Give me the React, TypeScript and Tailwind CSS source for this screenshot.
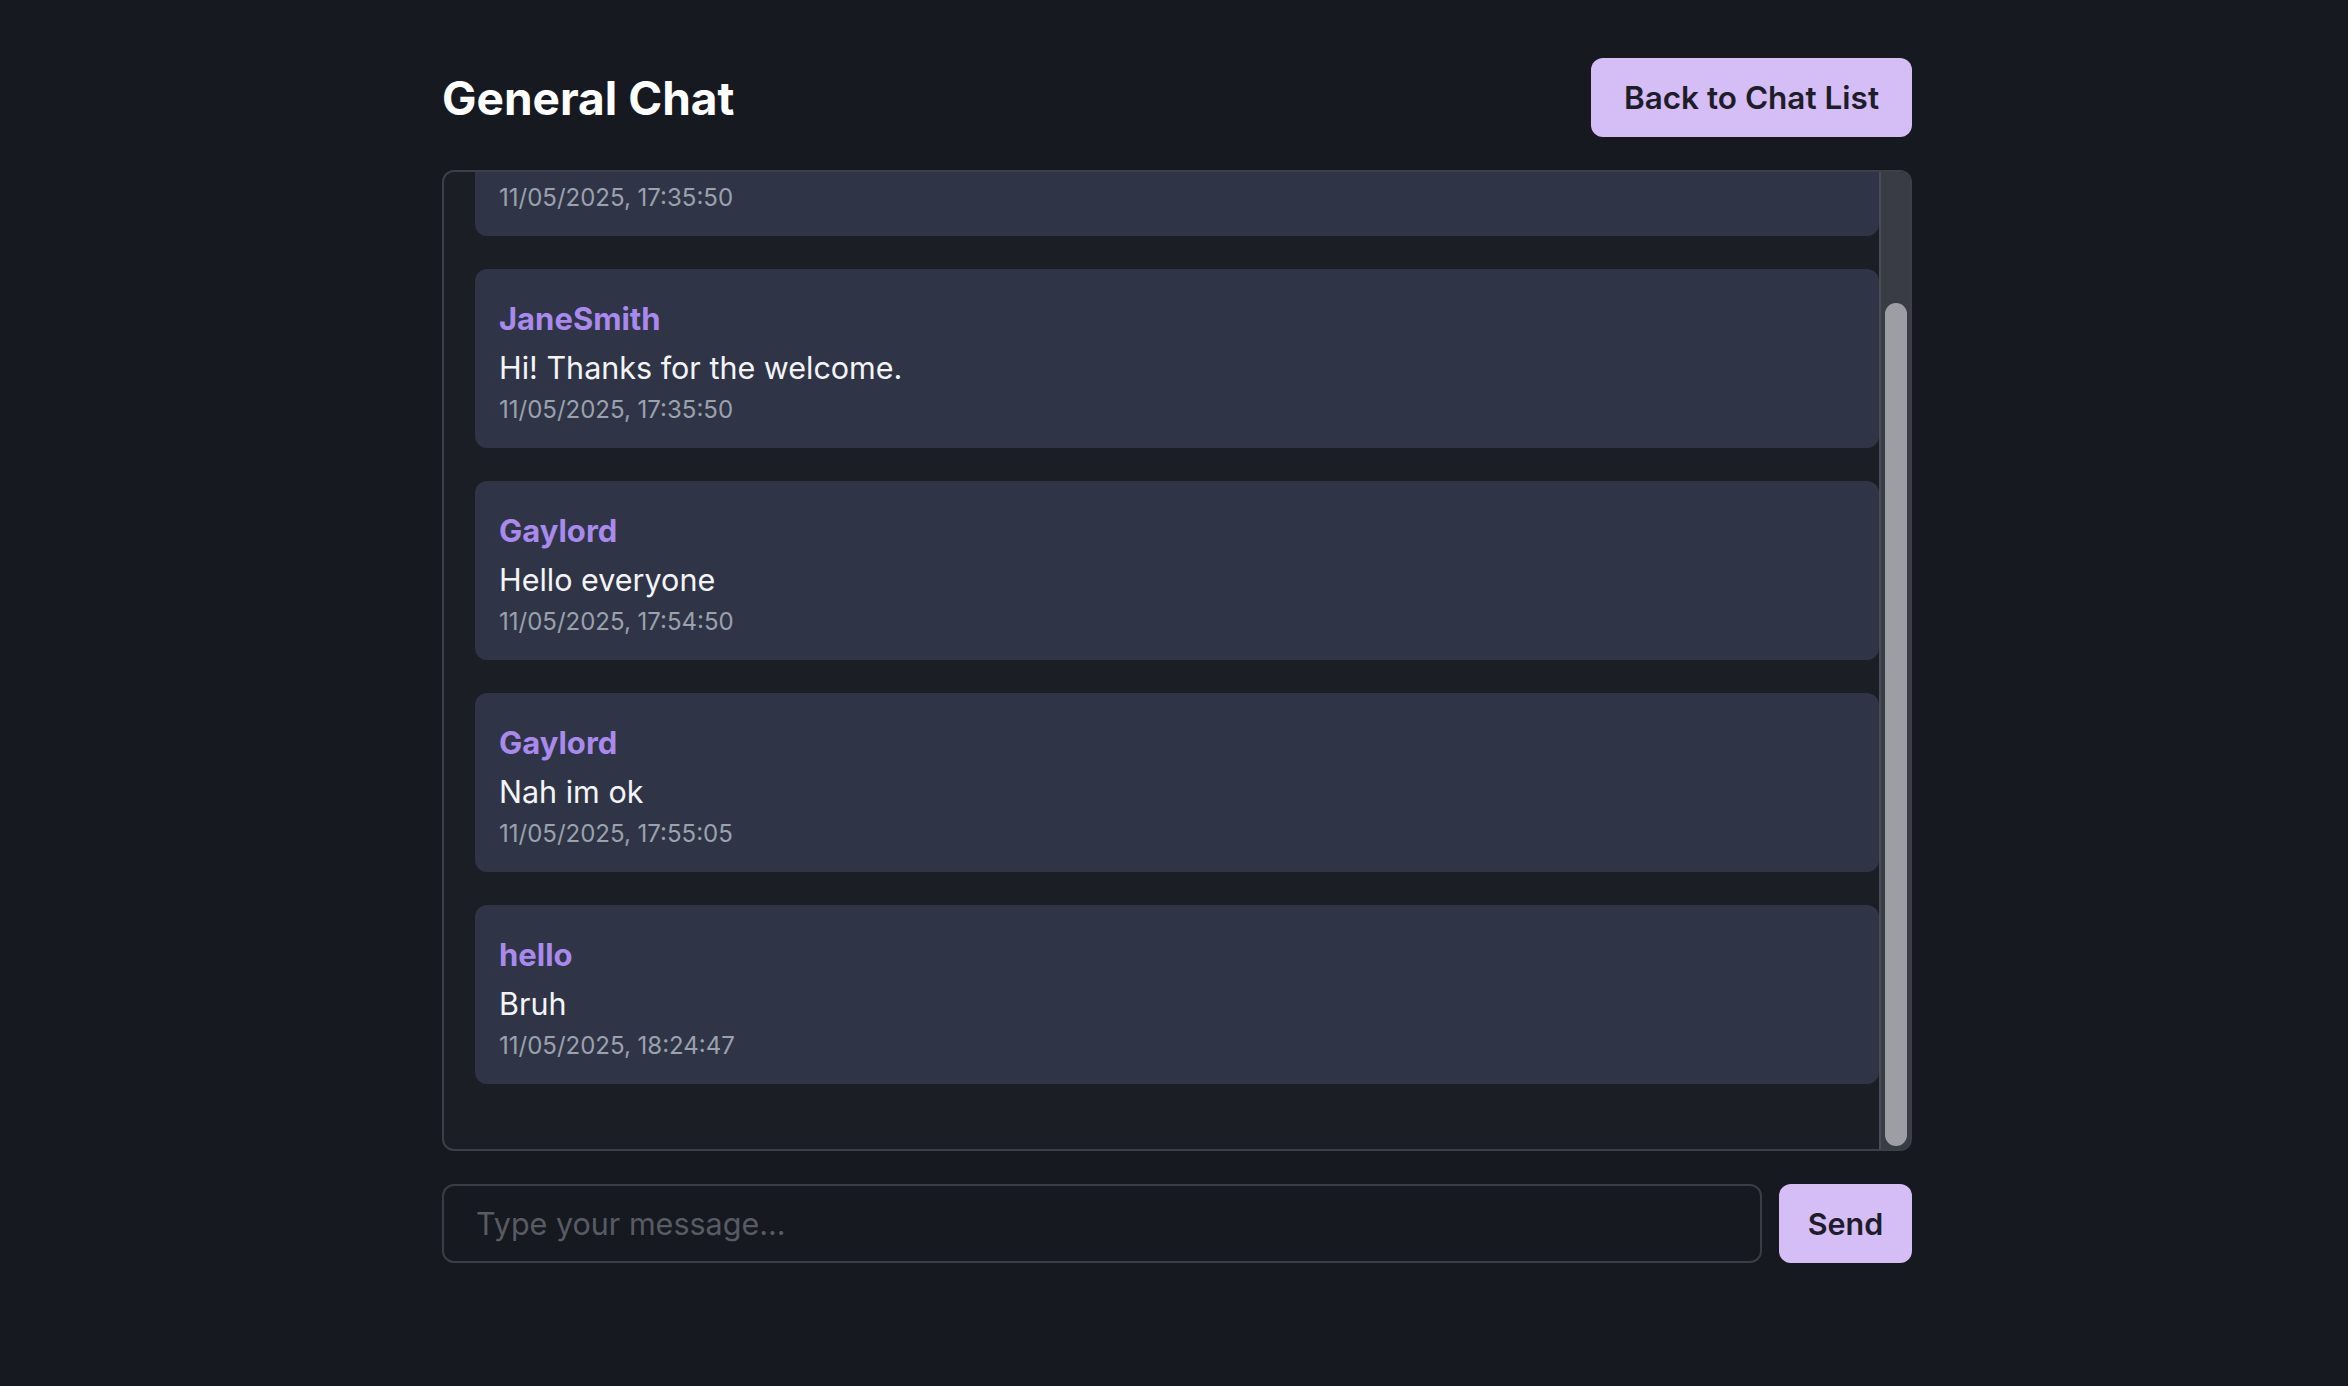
import React from 'react'

type Message = {
  id: number
  username: string
  content: string
  timestamp: string
}

const messages: Message[] = [
  { id: 1, username: 'JohnDoe', content: 'Welcome to the chat!', timestamp: '11/05/2025, 17:35:50' },
  { id: 2, username: 'JaneSmith', content: 'Hi! Thanks for the welcome.', timestamp: '11/05/2025, 17:35:50' },
  { id: 3, username: 'Gaylord', content: 'Hello everyone', timestamp: '11/05/2025, 17:54:50' },
  { id: 4, username: 'Gaylord', content: 'Nah im ok', timestamp: '11/05/2025, 17:55:05' },
  { id: 5, username: 'hello', content: 'Bruh', timestamp: '11/05/2025, 18:24:47' },
]

function MessageCard({ message }: { message: Message }) {
  return (
    <div className="h-[179px] shrink-0 rounded-[12px] bg-[#2f3546] pl-[24px] pr-6 pt-[29px]">
      <div className="text-[31px] leading-[42px] font-bold text-[#a98aec]">{message.username}</div>
      <div className="mt-[7px] text-[30.5px] leading-[42px] text-[#f4f4f6]">{message.content}</div>
      <div className="mt-[3px] text-[24px] leading-[36px] text-[#9ba1ad]">{message.timestamp}</div>
    </div>
  )
}

export default function App() {
  return (
    <div className="min-h-screen bg-[#171920] font-['Inter',sans-serif] pt-[58px]">
      <div className="ml-[442px] w-[1470px]">
        {/* Header */}
        <div className="flex items-center justify-between">
          <h1 className="text-[46px] leading-[56px] font-bold text-white">General Chat</h1>
          <button className="h-[79px] px-[33px] rounded-[12px] bg-[#d5bdf5] text-[31.5px] font-semibold text-[#1d1e2a]">
            Back to Chat List
          </button>
        </div>

        {/* Messages box */}
        <div className="mt-[33px] h-[981px] flex overflow-hidden rounded-[12px] border-2 border-[#3c3f48] bg-[#1c1e26]">
          <div className="flex-1 overflow-hidden pl-[31px]">
            <div className="-mt-[115px] flex flex-col gap-[33px]">
              {messages.map((m) => (
                <MessageCard key={m.id} message={m} />
              ))}
            </div>
          </div>
          {/* scrollbar */}
          <div className="w-[31px] flex flex-col border-l-2 border-[#4a4d56] bg-[#393c44] pt-[131px] pb-[3px] pl-[4px] pr-[3px]">
            <div className="flex-1 rounded-full bg-[#9d9ea4]" />
          </div>
        </div>

        {/* Input row */}
        <div className="mt-[33px] flex gap-[17px]">
          <input
            placeholder="Type your message..."
            className="flex-1 h-[79px] rounded-[12px] border-2 border-[#3a3d45] bg-[#171920] px-[32px] text-[30.5px] text-white placeholder:text-[#585b64] outline-none"
          />
          <button className="h-[79px] w-[133px] rounded-[12px] bg-[#d5bdf5] text-[30.5px] font-semibold text-[#1d1e2a]">
            Send
          </button>
        </div>
      </div>
    </div>
  )
}
